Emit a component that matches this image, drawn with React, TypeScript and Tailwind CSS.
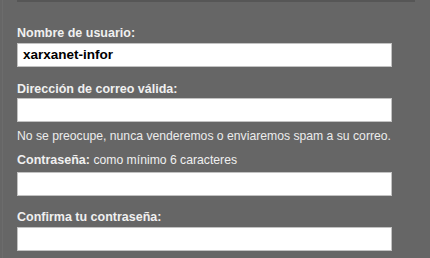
export default function App() {
  return (
    <div className="w-[430px] h-[258px] bg-[#666666] overflow-hidden relative font-['Liberation_Sans',Arial,sans-serif]">
      <div className="absolute left-[2px] top-0 bottom-0 w-px bg-[#6c6c6c]" />
      <div className="ml-[17px] w-[398px] h-[2px] bg-[#565656]" />
      <div className="pl-[17px] w-[392px] pt-[24px] flex flex-col">
        <label className="mb-[2px] text-[12.5px] leading-[15px] font-bold text-[#f0f0f0]">Nombre de usuario:</label>
        <div className="h-6 bg-white border border-[#c2c2c2] flex items-center px-[5px] text-[13.5px] font-bold text-black">
          xarxanet-infor
        </div>
        <label className="mt-[15px] mb-px text-[12.5px] leading-[15px] font-bold text-[#f0f0f0]">Dirección de correo válida:</label>
        <div className="h-6 bg-white border border-[#c2c2c2]" />
        <p className="mt-[7px] text-[12.2px] leading-[15px] text-[#ececec] whitespace-nowrap">
          No se preocupe, nunca venderemos o enviaremos spam a su correo.
        </p>
        <label className="mt-[9px] mb-[4px] text-[12.5px] leading-[15px] text-[#f0f0f0] whitespace-nowrap">
          <span className="font-bold">Contraseña:</span> <span className="text-[12.2px]">como mínimo 6 caracteres</span>
        </label>
        <div className="h-6 bg-white border border-[#c2c2c2]" />
        <label className="mt-[14px] mb-[2px] text-[12.5px] leading-[15px] font-bold text-[#f0f0f0]">Confirma tu contraseña:</label>
        <div className="h-6 bg-white border border-[#c2c2c2]" />
      </div>
    </div>
  )
}
